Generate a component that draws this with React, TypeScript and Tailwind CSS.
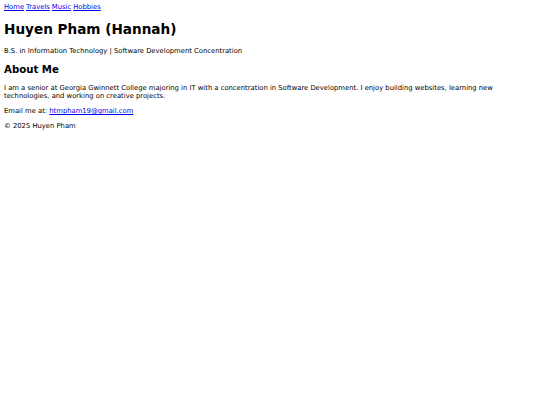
export default function App() {
  return (
    <div className="min-h-[405px] bg-white px-[4px] pt-[3px] font-['DejaVu_Sans',sans-serif] text-[6.8px] leading-[8px] text-black">
      <nav className="flex gap-[2px]">
        <a href="#" className="text-[#0000ee] underline">Home</a>
        <a href="#" className="text-[#0000ee] underline">Travels</a>
        <a href="#" className="text-[#0000ee] underline">Music</a>
        <a href="#" className="text-[#0000ee] underline">Hobbies</a>
      </nav>

      <header className="mt-[10px]">
        <h1 className="text-[13.6px] font-bold leading-[16px]">Huyen Pham (Hannah)</h1>
        <p className="mt-[10px]">B.S. in Information Technology | Software Development Concentration</p>
      </header>

      <section className="mt-[9px]">
        <h2 className="text-[10.2px] font-bold leading-[12px]">About Me</h2>
        <p className="mt-[8px]">
          I am a senior at Georgia Gwinnett College majoring in IT with a concentration in Software Development. I enjoy building websites, learning new technologies, and working on creative projects.
        </p>
        <p className="mt-[7px]">
          Email me at:{" "}
          <a href="mailto:htmpham19@gmail.com" className="text-[#0000ee] underline">htmpham19@gmail.com</a>
        </p>
      </section>

      <footer className="mt-[7px]">
        <p>© 2025 Huyen Pham</p>
      </footer>
    </div>
  );
}
